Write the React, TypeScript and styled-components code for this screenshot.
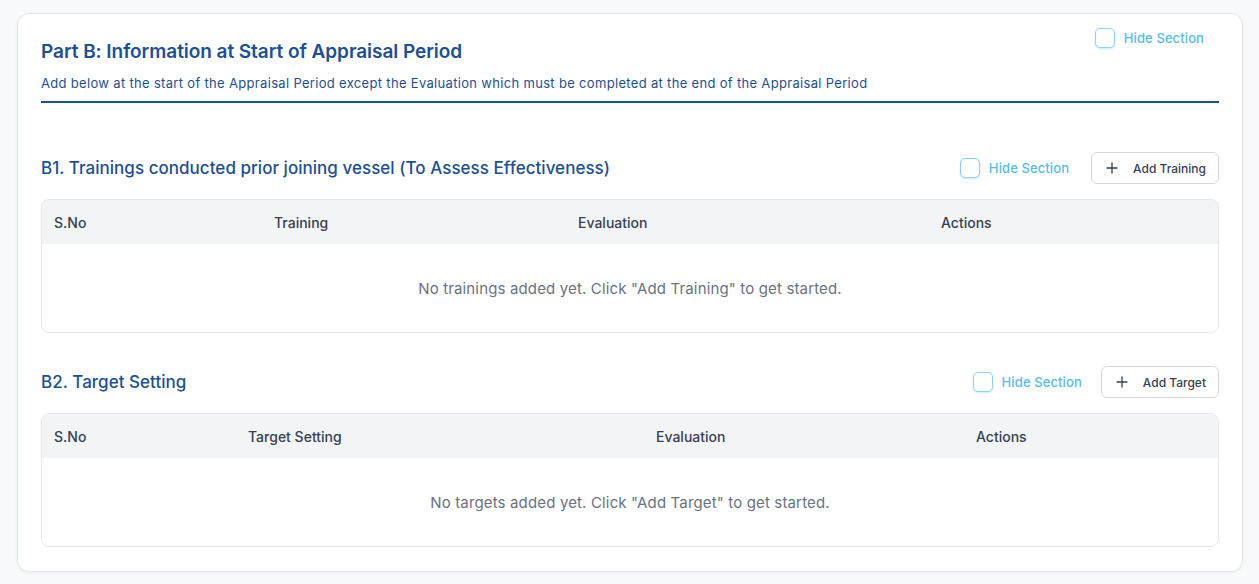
import React from "react";
import styled, { createGlobalStyle } from "styled-components";

const Global = createGlobalStyle`
  html, body { margin: 0; padding: 0; background: #f8f9fb; }
  body { font-family: Inter, "Noto Sans", sans-serif; -webkit-font-smoothing: antialiased; }
  * { box-sizing: border-box; }
`;

const Page = styled.div`
  padding: 13px 16px 12px 17px;
`;

const Card = styled.div`
  background: #ffffff;
  border: 1px solid #e3e7ee;
  border-radius: 12px;
  box-shadow: 0 1px 3px rgba(15, 23, 42, 0.06);
  padding: 14px 23px 24px 23px;
`;

const PartHeader = styled.div`
  display: flex;
  justify-content: space-between;
  align-items: flex-start;
  border-bottom: 2px solid #1c5096;
  padding-bottom: 9px;
`;

const PartTitleBlock = styled.div`
  padding-top: 10px;
`;

const PartTitle = styled.h2`
  margin: 0;
  font-size: 19px;
  line-height: 28px;
  font-weight: 600;
  color: #1c5096;
  letter-spacing: -0.05px;
`;

const PartSubtitle = styled.p`
  margin: 8px 0 0;
  font-size: 13px;
  line-height: 18px;
  color: #1c5096;
  letter-spacing: 0.32px;
`;

const HideToggle = styled.label<{ $mr?: number }>`
  display: flex;
  align-items: center;
  gap: 9px;
  margin-right: ${(p) => p.$mr ?? 0}px;
  cursor: pointer;
`;

const CheckBox = styled.span`
  width: 20px;
  height: 20px;
  border: 1.5px solid #8fd0f7;
  border-radius: 5px;
  background: #fff;
  box-shadow: 0 1px 2px rgba(56, 160, 230, 0.25);
`;

const HideText = styled.span`
  font-size: 13px;
  font-weight: 500;
  color: #55bdf2;
  line-height: 20px;
  letter-spacing: 0.1px;
`;

const Section = styled.section<{ $mt: number }>`
  margin-top: ${(p) => p.$mt}px;
`;

const SectionHeader = styled.div`
  display: flex;
  align-items: center;
  justify-content: space-between;
  margin-bottom: 15px;
`;

const SectionTitle = styled.h3`
  margin: 0;
  font-size: 17px;
  font-weight: 500;
  color: #1c5096;
  letter-spacing: 0.03px;
`;

const Controls = styled.div<{ $gap: number }>`
  display: flex;
  align-items: center;
  gap: ${(p) => p.$gap}px;
`;

const AddButton = styled.button`
  display: flex;
  align-items: center;
  gap: 15px;
  height: 32px;
  padding: 0 12px 0 14px;
  background: #fff;
  border: 1px solid #d3d6dc;
  border-radius: 6px;
  font-family: Inter, "Noto Sans", sans-serif;
  font-size: 12px;
  font-weight: 500;
  color: #374151;
  cursor: pointer;
`;

const Table = styled.div`
  border: 1px solid #e5e7eb;
  border-radius: 8px;
  overflow: hidden;
`;

const HeadRow = styled.div<{ $cols: string }>`
  display: grid;
  grid-template-columns: ${(p) => p.$cols};
  background: #f3f4f6;
  height: 44px;
  align-items: center;
`;

const HeadCell = styled.div`
  padding-left: 12px;
  font-size: 14px;
  font-weight: 500;
  color: #374151;
`;

const EmptyRow = styled.div`
  height: 88px;
  display: flex;
  align-items: center;
  justify-content: center;
  font-size: 15px;
  color: #6b7280;
  letter-spacing: 0.15px;
`;

const PlusIcon = () => (
  <svg width="12" height="12" viewBox="0 0 12 12" fill="none" stroke="#374151" strokeWidth="1.3" strokeLinecap="round">
    <path d="M6 1v10M1 6h10" />
  </svg>
);

type SectionProps = {
  title: string;
  button: string;
  columns: string[];
  cols: string;
  empty: string;
  mt: number;
  gap: number;
};

const TableSection = ({ title, button, columns, cols, empty, mt, gap }: SectionProps) => (
  <Section $mt={mt}>
    <SectionHeader>
      <SectionTitle>{title}</SectionTitle>
      <Controls $gap={gap}>
        <HideToggle>
          <CheckBox />
          <HideText>Hide Section</HideText>
        </HideToggle>
        <AddButton>
          <PlusIcon />
          {button}
        </AddButton>
      </Controls>
    </SectionHeader>
    <Table>
      <HeadRow $cols={cols}>
        {columns.map((c) => (
          <HeadCell key={c}>{c}</HeadCell>
        ))}
      </HeadRow>
      <EmptyRow>{empty}</EmptyRow>
    </Table>
  </Section>
);

export default function App() {
  return (
    <Page>
      <Global />
      <Card>
        <PartHeader>
          <PartTitleBlock>
            <PartTitle>Part B: Information at Start of Appraisal Period</PartTitle>
            <PartSubtitle>
              Add below at the start of the Appraisal Period except the Evaluation which must be completed at the end of the Appraisal Period
            </PartSubtitle>
          </PartTitleBlock>
          <HideToggle $mr={15}>
            <CheckBox />
            <HideText>Hide Section</HideText>
          </HideToggle>
        </PartHeader>
        <TableSection
          mt={49}
          gap={22}
          title="B1. Trainings conducted prior joining vessel (To Assess Effectiveness)"
          button="Add Training"
          columns={["S.No", "Training", "Evaluation", "Actions"]}
          cols="220px 304px 363px 1fr"
          empty={'No trainings added yet. Click "Add Training" to get started.'}
        />
        <TableSection
          mt={33}
          gap={19}
          title="B2. Target Setting"
          button="Add Target"
          columns={["S.No", "Target Setting", "Evaluation", "Actions"]}
          cols="194px 408px 320px 1fr"
          empty={'No targets added yet. Click "Add Target" to get started.'}
        />
      </Card>
    </Page>
  );
}
